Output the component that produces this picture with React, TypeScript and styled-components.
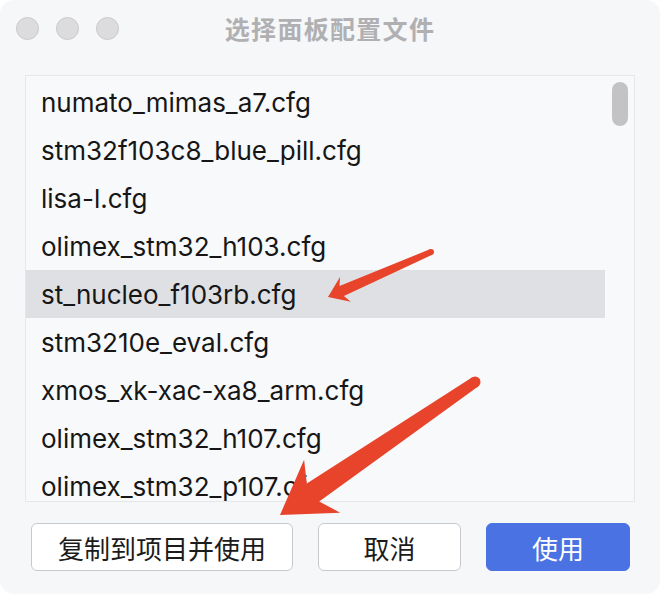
import React from "react";
import styled, { createGlobalStyle } from "styled-components";

const GlobalStyle = createGlobalStyle`
  html, body {
    margin: 0;
    padding: 0;
    background: #ffffff;
  }
  #root {
    width: 660px;
    height: 594px;
  }
`;

const Window = styled.div`
  position: relative;
  width: 660px;
  height: 594px;
  box-sizing: border-box;
  background: #f6f7f9;
  border-radius: 14px;
  overflow: hidden;
  display: flex;
  flex-direction: column;
`;

const TitleBar = styled.div`
  height: 56px;
  display: grid;
  grid-template-columns: 1fr auto 1fr;
  align-items: center;
  padding: 0 16px;
`;

const Lights = styled.div`
  display: flex;
  gap: 17px;
  align-items: center;
`;

const Light = styled.span`
  width: 23px;
  height: 23px;
  box-sizing: border-box;
  border-radius: 50%;
  background: #dcdcde;
  border: 1px solid #c9c9cb;
`;

const Title = styled.div`
  font-family: "Noto Sans CJK SC", "Noto Sans", sans-serif;
  font-weight: 700;
  font-size: 25px;
  letter-spacing: 1.3px;
  color: #b0b0b2;
  line-height: 1;
`;

const Body = styled.div`
  padding: 19px 25px 0 25px;
`;

const ListBox = styled.div`
  position: relative;
  height: 427px;
  box-sizing: border-box;
  border: 1.5px solid #e6e7ea;
  background: #f8f9fb;
  overflow: hidden;
  display: flex;
`;

const Rows = styled.div`
  flex: 1;
  padding-top: 2px;
  display: flex;
  flex-direction: column;
`;

const Row = styled.div<{ $selected?: boolean }>`
  height: 48px;
  flex-shrink: 0;
  display: flex;
  align-items: center;
  padding-left: 15px;
  font-family: Inter, "Noto Sans", sans-serif;
  font-size: 26px;
  color: #161616;
  white-space: nowrap;
  background: ${(p) => (p.$selected ? "#dfe0e4" : "transparent")};
`;

const ScrollLane = styled.div`
  width: 29px;
  flex-shrink: 0;
  display: flex;
  justify-content: center;
  padding-top: 6px;
`;

const Thumb = styled.div`
  width: 16px;
  height: 44px;
  border-radius: 8px;
  background: #c3c3c5;
`;

const Footer = styled.div`
  display: flex;
  align-items: center;
  padding: 21px 30px 0 31px;
  gap: 25px;
`;

const Button = styled.button<{ $primary?: boolean; $w: number }>`
  width: ${(p) => p.$w}px;
  height: 48px;
  box-sizing: border-box;
  border-radius: 6px;
  border: 1.5px solid ${(p) => (p.$primary ? "#4a72e2" : "#c8c9cc")};
  background: ${(p) => (p.$primary ? "#4a72e2" : "#ffffff")};
  color: ${(p) => (p.$primary ? "#ffffff" : "#1b1b1b")};
  font-family: "Noto Sans CJK SC", "Noto Sans", sans-serif;
  font-size: 26px;
  padding: 0;
  display: flex;
  align-items: center;
  justify-content: center;
`;

const Overlay = styled.svg`
  position: absolute;
  left: 0;
  top: 0;
  pointer-events: none;
`;

type P = [number, number];

function arrowPoints(
  tail: P,
  tip: P,
  headLen: number,
  barbBack: number,
  headHalf: number,
  stemHead: number,
  stemTail: number
): string {
  const dx = tip[0] - tail[0];
  const dy = tip[1] - tail[1];
  const len = Math.hypot(dx, dy);
  const ux = dx / len;
  const uy = dy / len;
  const nx = -uy;
  const ny = ux;
  const J: P = [tip[0] - ux * headLen, tip[1] - uy * headLen];
  const B: P = [J[0] - ux * barbBack, J[1] - uy * barbBack];
  const pts: P[] = [
    tip,
    [B[0] + nx * headHalf, B[1] + ny * headHalf],
    [J[0] + nx * stemHead, J[1] + ny * stemHead],
    [tail[0] + nx * stemTail, tail[1] + ny * stemTail],
    [tail[0] - nx * stemTail, tail[1] - ny * stemTail],
    [J[0] - nx * stemHead, J[1] - ny * stemHead],
    [B[0] - nx * headHalf, B[1] - ny * headHalf],
  ];
  return pts.map((p) => `${p[0].toFixed(1)},${p[1].toFixed(1)}`).join(" ");
}

const files = [
  "numato_mimas_a7.cfg",
  "stm32f103c8_blue_pill.cfg",
  "lisa-l.cfg",
  "olimex_stm32_h103.cfg",
  "st_nucleo_f103rb.cfg",
  "stm3210e_eval.cfg",
  "xmos_xk-xac-xa8_arm.cfg",
  "olimex_stm32_h107.cfg",
  "olimex_stm32_p107.cfg",
];

const RED = "#e8432b";

export default function App() {
  const a1Tail: P = [431, 252];
  const a2Tail: P = [475, 382];
  return (
    <>
      <GlobalStyle />
      <Window>
        <TitleBar>
          <Lights>
            <Light />
            <Light />
            <Light />
          </Lights>
          <Title>选择面板配置文件</Title>
          <div />
        </TitleBar>
        <Body>
          <ListBox>
            <Rows>
              {files.map((f, i) => (
                <Row key={f} $selected={i === 4}>
                  {f}
                </Row>
              ))}
            </Rows>
            <ScrollLane>
              <Thumb />
            </ScrollLane>
          </ListBox>
        </Body>
        <Footer>
          <Button $w={262}>复制到项目并使用</Button>
          <Button $w={143}>取消</Button>
          <Button $w={144} $primary>
            使用
          </Button>
        </Footer>
        <Overlay width="660" height="594" viewBox="0 0 660 594">
          <polygon
            points={arrowPoints(a1Tail, [328, 297], 15, 4, 13.5, 5.5, 3)}
            fill={RED}
            strokeLinejoin="round"
          />
          <circle cx={a1Tail[0]} cy={a1Tail[1]} r={3} fill={RED} />
          <polygon
            points={arrowPoints(a2Tail, [280, 515], 40, 11, 32, 11, 5.5)}
            fill={RED}
            strokeLinejoin="round"
          />
          <circle cx={a2Tail[0]} cy={a2Tail[1]} r={5.5} fill={RED} />
        </Overlay>
      </Window>
    </>
  );
}
